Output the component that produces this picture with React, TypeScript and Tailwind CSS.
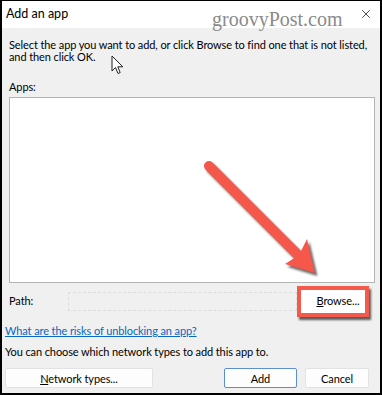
import { X } from 'lucide-react';

const font = { fontFamily: 'Lato, "Noto Sans", "Liberation Sans", sans-serif' };

function Arrow() {
  return (
    <svg className="absolute left-0 top-0 pointer-events-none" width="382" height="395" viewBox="0 0 382 395">
      <defs>
        <filter id="sh" x="-20%" y="-20%" width="140%" height="140%">
          <feGaussianBlur stdDeviation="1.2" />
        </filter>
      </defs>
      {/* shadow */}
      <g transform="translate(2.5,3)" filter="url(#sh)" opacity="0.75">
        <line x1="207" y1="165" x2="296" y2="254" stroke="#3a3a3a" strokeWidth="10" strokeLinecap="round" />
        <polygon points="283,263 313,272 305,238 297,254" fill="#3a3a3a" />
      </g>
      <line x1="207" y1="165" x2="296" y2="254" stroke="#f5574a" strokeWidth="10" strokeLinecap="round" />
      <polygon points="283,263 313,272 305,238 297,254" fill="#f5574a" />
    </svg>
  );
}

function Cursor() {
  return (
    <svg className="absolute left-[109px] top-[54px]" width="14" height="20" viewBox="0 0 14 20">
      <path d="M1 1 L1 16 L4.5 12.5 L7 18.5 L9.2 17.6 L6.8 11.8 L11.8 11.8 Z" fill="#fff" stroke="#222" strokeWidth="1" strokeLinejoin="round" />
    </svg>
  );
}

export default function App() {
  return (
    <div
      className="relative w-[382px] h-[395px] bg-[#f0f0f0] border-t border-l-2 border-r-2 border-b-2 border-black overflow-hidden text-black"
      style={font}
    >
      <div className="h-[27px] bg-white flex items-center justify-between pl-[4px] pr-[7px]">
        <span className="text-[12.5px] leading-none">Add an app</span>
        <X size={14} strokeWidth={1.2} className="text-black -mt-[2px]" />
      </div>

      <span
        className="absolute left-[210px] top-[6px] text-[20px] leading-[24px] text-[#8a8a8a]"
        style={{ fontFamily: '"Liberation Serif", "DejaVu Serif", serif' }}
      >
        groovyPost.com
      </span>

      <div className="pl-[7px] pr-[5px] pt-[11px] text-[11px] leading-[12px] tracking-[-0.1px] whitespace-nowrap">
        <p>
          Select the app you want to add, or click Browse to find one that is not listed,
          <br />
          and then click OK.
        </p>
        <div className="mt-[18px]">Apps:</div>
        <div className="mt-[4px] h-[186px] bg-white border border-[#b4b4b4]" />

        <div className="mt-[2px] h-[32px] flex items-center">
          <span className="w-[59px]">Path:</span>
          <div className="flex-1 h-[19px] border border-dashed border-[#dcdcdc] bg-[#f0f0f0]" />
          <div className="mr-[6px] w-[72px] h-[31px] border-[4px] border-[#f45a4b] bg-[#f45a4b] shadow-[2px_3px_2px_rgba(40,40,40,0.75)]">
            <div className="h-full bg-white flex items-center justify-center pl-[10px]">
              <span>
                <span className="underline">B</span>rowse...
              </span>
            </div>
          </div>
        </div>
      </div>

      <div className="pl-[3px] pr-[11px] text-[11px] leading-[12px] tracking-[-0.1px] whitespace-nowrap">
        <a className="block mt-[8px] text-[#0a66c2] underline">What are the risks of unblocking an app?</a>
        <p className="mt-[9px]">You can choose which network types to add this app to.</p>
        <div className="mt-[10px] flex items-center">
          <button className="w-[148px] h-[20px] bg-[#fdfdfd] border border-[#e2e2e2] rounded-[2px] leading-none">
            <span className="underline">N</span>etwork types...
          </button>
          <div className="flex-1" />
          <button className="w-[73px] h-[20px] bg-[#fdfdfd] border border-[#5b8fd0] rounded-[2px] leading-none">
            Add
          </button>
          <button className="ml-[8px] w-[64px] h-[20px] bg-[#fdfdfd] border border-[#e2e2e2] rounded-[2px] leading-none">
            Cancel
          </button>
        </div>
      </div>

      <Cursor />
      <Arrow />
    </div>
  );
}
